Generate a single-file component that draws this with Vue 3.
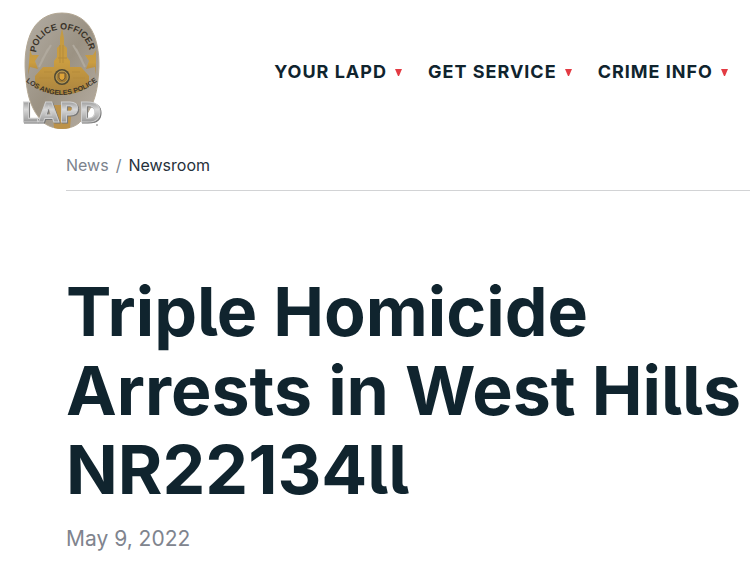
<template>
  <header class="site-header">
    <a class="logo" href="#" aria-label="LAPD home">
      <svg viewBox="0 0 84 120" width="84" height="120" aria-hidden="true">
        <defs>
          <linearGradient id="silver" x1="0" y1="0" x2="1" y2="1">
            <stop offset="0" stop-color="#b3ada4" />
            <stop offset="0.5" stop-color="#9b9283" />
            <stop offset="1" stop-color="#b8afa4" />
          </linearGradient>
          <linearGradient id="gold" x1="0" y1="0" x2="0" y2="1">
            <stop offset="0" stop-color="#c29a45" />
            <stop offset="0.5" stop-color="#cb9d40" />
            <stop offset="1" stop-color="#a98340" />
          </linearGradient>
          <linearGradient id="chrome" x1="0" y1="0" x2="0" y2="1">
            <stop offset="0" stop-color="#777" />
            <stop offset="0.4" stop-color="#d8d8d8" />
            <stop offset="0.7" stop-color="#aaa" />
            <stop offset="1" stop-color="#707070" />
          </linearGradient>
          <path id="arc-top" d="M16 44C16 9 67 9 70 42" />
          <path id="arc-bottom" d="M4 68Q41 98 79 68" />
        </defs>
        <path
          d="M42 1C56 1 68 8 74 23C79 36 80 51 78 67C77 84 71 99 61 109C53 119 31 119 22 109C12 99 7 84 6 67C4 51 5 36 10 23C16 8 28 1 42 1Z"
          fill="url(#silver)"
          stroke="#b3a793"
        />
        <path d="M10 38L12 43L19 43L15 49L18 57L10 55L8 63ZM76 38L73 43L65 43L69 49L66 57L75 55L76 63Z" fill="url(#gold)" />
        <path d="M28 37L19 55M56 37L65 55M31 33L22 48M53 33L62 48" stroke="#b0a99d" stroke-width="2" />
        <path
          d="M42 16L44 26V33L47 36V45L50 49V55H61L69 64V75Q42 91 15 75V64L23 55H34V49L37 45V36L40 33V26Z"
          fill="url(#gold)"
        />
        <path d="M40 33V51M43 33V51M38 46H47M19 66H31M53 66H65M24 60H32M52 60H60" stroke="#b58b3b" fill="none" />
        <circle cx="42" cy="65" r="8" fill="#4f4933" />
        <circle cx="42" cy="65" r="6" fill="#a57d32" stroke="#c1a15a" />
        <path d="M39 61H45V66Q42 71 39 66Z" fill="#dfa438" stroke="#635139" />
        <path d="M32 93H52L50 116Q42 118 34 116Z" fill="#bc9249" />
        <text class="badge-text">
          <textPath href="#arc-top" startOffset="50%" text-anchor="middle">POLICE OFFICER</textPath>
        </text>
        <text class="badge-text small">
          <textPath href="#arc-bottom" startOffset="50%" text-anchor="middle">LOS ANGELES POLICE</textPath>
        </text>
        <text class="badge-name" x="1" y="110">LAPD</text>
        <circle cx="77" cy="113" r="1" fill="#aaa" />
      </svg>
    </a>
    <nav class="main-nav" aria-label="Main">
      <button v-for="item in menu" :key="item" type="button" aria-haspopup="true">
        {{ item }}
        <svg viewBox="0 0 7 7" width="7" height="7" aria-hidden="true">
          <path d="M0 0H7L4 7H3Z" fill="#e33b43" />
        </svg>
      </button>
    </nav>
  </header>

  <main>
    <nav class="breadcrumb" aria-label="Breadcrumb">
      <a href="#">News</a>
      <span>/</span>
      <a class="current" href="#" aria-current="page">Newsroom</a>
    </nav>
    <article>
      <h1>Triple Homicide Arrests in West Hills NR22134ll</h1>
      <time datetime="2022-05-09">May 9, 2022</time>
    </article>
  </main>
</template>

<script setup>
const menu = ['YOUR LAPD', 'GET SERVICE', 'CRIME INFO']
</script>

<style>
body { margin: 0; background: #fff; }
</style>

<style scoped>
.site-header, main { font-family: Inter, "Liberation Sans", sans-serif; color: #10242e; }
.site-header { display: flex; align-items: center; justify-content: space-between; padding: 12px 22px 0 20px; }
.logo { display: flex; flex-shrink: 0; }
.badge-text { font: bold 9px "Liberation Sans", sans-serif; fill: #3a3329; }
.badge-text.small { font-size: 7px; }
.badge-name { font: bold 27px "DejaVu Sans", sans-serif; fill: url(#chrome); stroke: #d0d0d0; stroke-width: 1; filter: drop-shadow(1px 1px 0 #777); }
.main-nav { display: flex; gap: 26px; }
.main-nav button { display: flex; align-items: center; gap: 8px; padding: 0; border: 0; background: none; color: inherit; font: 700 18px/24px Inter, "Liberation Sans", sans-serif; letter-spacing: 1px; white-space: nowrap; cursor: pointer; }
main { padding: 23px 0 16px 66px; }
.breadcrumb { display: flex; gap: 7px; padding-bottom: 15px; border-bottom: 1px solid #d2d3d5; font-size: 16px; line-height: 20px; color: #7c838d; }
.breadcrumb a { color: inherit; text-decoration: none; }
.breadcrumb .current { color: #26313b; }
article { padding-top: 81px; }
h1 { margin: 0 0 16px; font-size: 68px; line-height: 79px; font-weight: 700; font-feature-settings: "cv05"; }
time { display: block; font-size: 21px; line-height: 28px; color: #80848e; }
</style>
